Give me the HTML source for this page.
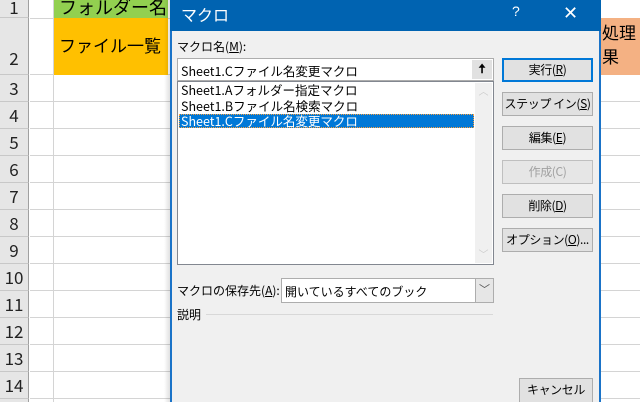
<!DOCTYPE html>
<html><head><meta charset="utf-8"><style>
*{box-sizing:border-box;margin:0;padding:0}
html,body{width:640px;height:402px;overflow:hidden}
body{background:#fff;position:relative;font-family:"Liberation Sans","Noto Sans CJK JP",sans-serif;}
.a{position:absolute}
.rh{position:absolute;left:0;width:29px;background:#e6e6e6;border-bottom:1px solid #c8c8c8;border-right:1px solid #a0a0a0;font-size:17px;color:#222;text-align:center;font-family:"Noto Sans CJK JP",sans-serif}
.hl{position:absolute;left:30px;width:610px;height:1px;background:#d4d4d4}
.btn{position:absolute;left:502px;width:91px;height:24px;background:#e1e1e1;border:1px solid #adadad;font-size:12px;text-align:center;line-height:22px;color:#000;font-family:"Noto Sans CJK JP",sans-serif;white-space:nowrap;letter-spacing:-0.4px;overflow:hidden}
.d{font-family:"Noto Sans CJK JP",sans-serif;font-size:12px;color:#000;white-space:nowrap}
u{text-decoration:underline}
</style></head><body>
<div class="a" style="left:53px;top:0;width:1px;height:402px;background:#d4d4d4"></div>
<div class="hl" style="top:101px"></div><div class="hl" style="top:128px"></div><div class="hl" style="top:155px"></div><div class="hl" style="top:182px"></div><div class="hl" style="top:209px"></div><div class="hl" style="top:236px"></div><div class="hl" style="top:263px"></div><div class="hl" style="top:290px"></div><div class="hl" style="top:317px"></div><div class="hl" style="top:344px"></div><div class="hl" style="top:371px"></div><div class="hl" style="top:398px"></div>
<div class="hl" style="top:18px"></div><div class="hl" style="top:74px"></div>
<div class="a" style="left:54px;top:0;width:114px;height:18px;background:#92d050;font-size:18px;line-height:14px;overflow:hidden;font-family:'Noto Sans CJK JP',sans-serif;padding-left:5px;white-space:nowrap">フォルダー名</div>
<div class="a" style="left:54px;top:18px;width:114px;height:57px;background:#ffc000;font-size:17px;padding:14px 0 0 5px;font-family:'Noto Sans CJK JP',sans-serif;white-space:nowrap;overflow:hidden">ファイル一覧</div>
<div class="a" style="left:600px;top:18px;width:40px;height:57px;background:#f4b183;font-size:17px;line-height:24px;padding:2px 0 0 2px;font-family:'Noto Sans CJK JP',sans-serif">処理<br>果</div>
<div class="rh" style="top:0;height:18px;line-height:14px">1</div>
<div class="rh" style="top:18px;height:57px;line-height:80px">2</div>
<div class="rh" style="top:75px;height:27px;line-height:26px">3</div>
<div class="rh" style="top:102px;height:27px;line-height:26px">4</div>
<div class="rh" style="top:129px;height:27px;line-height:26px">5</div>
<div class="rh" style="top:156px;height:27px;line-height:26px">6</div>
<div class="rh" style="top:183px;height:27px;line-height:26px">7</div>
<div class="rh" style="top:210px;height:27px;line-height:26px">8</div>
<div class="rh" style="top:237px;height:27px;line-height:26px">9</div>
<div class="rh" style="top:264px;height:27px;line-height:26px">10</div>
<div class="rh" style="top:291px;height:27px;line-height:26px">11</div>
<div class="rh" style="top:318px;height:27px;line-height:26px">12</div>
<div class="rh" style="top:345px;height:27px;line-height:26px">13</div>
<div class="rh" style="top:372px;height:27px;line-height:26px">14</div>
<div class="rh" style="top:399px;height:3px;border-bottom:0"></div>
<div class="a" style="left:164px;top:0;width:6px;height:402px;background:linear-gradient(90deg,rgba(0,0,0,0),rgba(0,0,0,.12))"></div>
<div class="a" style="left:170px;top:0;width:431px;height:402px;background:#f0f0f0;border-left:2px solid #1a73c8;border-right:2px solid #1a73c8"></div>
<div class="a" style="left:170px;top:0;width:431px;height:31px;background:#0063b1;color:#fff;font-size:16px;line-height:28px;padding-left:11px;font-family:'Noto Sans CJK JP',sans-serif">マクロ</div>
<div class="a" style="left:512px;top:3px;color:#fff;font-size:14px">?</div>
<div class="a" style="left:563px;top:3px;color:#fff;font-size:18px">✕</div>
<div class="a d" style="left:177px;top:38px">マクロ名(<u>M</u>):</div>
<div class="a" style="left:177px;top:58px;width:317px;height:23px;background:#fff;border:1px solid #adadad"></div>
<div class="a d" style="left:181px;top:61px;font-size:12.5px">Sheet1.Cファイル名変更マクロ</div>
<div class="a" style="left:472px;top:60px;width:20px;height:19px;background:#e1e1e1;text-align:center;font-size:13px;line-height:18px;font-weight:bold">🠅</div>
<div class="a" style="left:177px;top:81px;width:317px;height:184px;background:#fff;border:1px solid #828790"></div>
<div class="a" style="left:475px;top:83px;width:17px;height:180px;background:#f0f0f0;color:#ccc;font-size:10px;text-align:center">︿<div style="position:absolute;bottom:2px;width:17px">﹀</div></div>
<div class="a" style="left:179px;top:114px;width:295px;height:14px;background:#0078d7;border:1px dotted #f8a040"></div>
<div class="a d" style="left:181px;top:82px;font-size:12.5px;line-height:15.5px">Sheet1.Aフォルダー指定マクロ<br>Sheet1.Bファイル名検索マクロ<br><span style="color:#fff">Sheet1.Cファイル名変更マクロ</span></div>
<div class="btn" style="top:58px;border:2px solid #0078d7;line-height:20px">実行(<u>R</u>)</div>
<div class="btn" style="top:92px">ステップ イン(<u>S</u>)</div>
<div class="btn" style="top:126px">編集(<u>E</u>)</div>
<div class="btn" style="top:160px;background:#e6e6e6;border-color:#bfbfbf;color:#a0a0a0">作成(C)</div>
<div class="btn" style="top:194px">削除(<u>D</u>)</div>
<div class="btn" style="top:228px">オプション(<u>O</u>)...</div>
<div class="btn" style="top:378px;left:519px;width:74px;height:30px">キャンセル</div>
<div class="a d" style="left:177px;top:282px">マクロの保存先(<u>A</u>):</div>
<div class="a" style="left:281px;top:278px;width:213px;height:25px;background:#fff;border:1px solid #adadad"></div>
<div class="a" style="left:475px;top:279px;width:18px;height:23px;background:#e6e6e6;border-left:1px solid #adadad;text-align:center;font-size:11px;color:#555;line-height:22px">﹀</div>
<div class="a d" style="left:285px;top:283px">開いているすべてのブック</div>
<div class="a d" style="left:177px;top:306px">説明</div>
<div class="a" style="left:206px;top:314px;width:287px;height:1px;background:#d8d8d8"></div>
</body></html>
